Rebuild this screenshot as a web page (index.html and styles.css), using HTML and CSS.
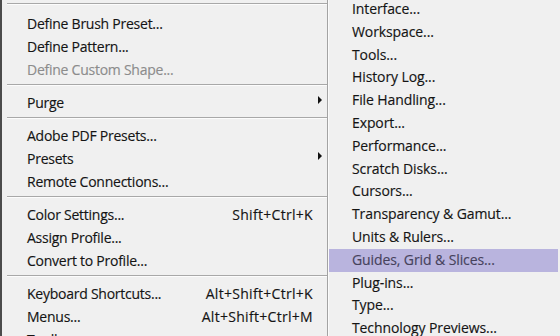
FILE: index.html
```html
<!DOCTYPE html>
<html lang="en">
<head>
    <meta charset="UTF-8">
    <title>Edit Menu - Preferences</title>
    <link rel="stylesheet" href="styles.css">
</head>
<body>
    <div id="menus">
        <div class="menu" id="edit-menu">
            <div class="sep sep-top"></div>
            <div class="item">Define Brush Preset...</div>
            <div class="item">Define Pattern...</div>
            <div class="item disabled">Define Custom Shape...</div>
            <div class="sep"></div>
            <div class="item">Purge<span class="arrow"></span></div>
            <div class="sep"></div>
            <div class="item">Adobe PDF Presets...</div>
            <div class="item">Presets<span class="arrow"></span></div>
            <div class="item">Remote Connections...</div>
            <div class="sep"></div>
            <div class="item">Color Settings...<span class="key">Shift+Ctrl+K</span></div>
            <div class="item">Assign Profile...</div>
            <div class="item">Convert to Profile...</div>
            <div class="sep"></div>
            <div class="item">Keyboard Shortcuts...<span class="key">Alt+Shift+Ctrl+K</span></div>
            <div class="item">Menus...<span class="key">Alt+Shift+Ctrl+M</span></div>
            <div class="item">Toolbar...</div>
        </div>

        <div class="menu" id="prefs-menu">
            <div class="item">Interface...</div>
            <div class="item">Workspace...</div>
            <div class="item">Tools...</div>
            <div class="item">History Log...</div>
            <div class="item">File Handling...</div>
            <div class="item">Export...</div>
            <div class="item">Performance...</div>
            <div class="item">Scratch Disks...</div>
            <div class="item">Cursors...</div>
            <div class="item">Transparency &amp; Gamut...</div>
            <div class="item">Units &amp; Rulers...</div>
            <div class="item active">Guides, Grid &amp; Slices...</div>
            <div class="item">Plug-ins...</div>
            <div class="item">Type...</div>
            <div class="item">Technology Previews...</div>
        </div>
    </div>
</body>
</html>
```

FILE: styles.css
```css
body {
    margin: 0;
    width: 560px;
    height: 336px;
    overflow: hidden;
    background-color: #f0f0f0;
    font-family: "Open Sans", "Noto Sans", sans-serif;
    font-size: 14px;
    letter-spacing: -0.25px;
    color: #141414;
    -webkit-text-stroke: 0.15px #141414;
}
#menus {
    display: flex;
    height: 336px;
}
.menu {
    background-color: #f0f0f0;
}
#edit-menu {
    width: 325px;
    border-left: 2px solid #4c4c4c;
    border-right: 1px solid #a3a3a3;
}
#prefs-menu {
    flex: 1;
    border-left: 1px solid #fbfbfb;
    padding-right: 2px;
    margin-top: -2px;
    letter-spacing: -0.1px;
}
.item {
    display: flex;
    justify-content: space-between;
    align-items: center;
    height: 23px;
    line-height: 23px;
    white-space: nowrap;
    position: relative;
}
#edit-menu .item {
    padding: 0 14px 0 25px;
}
#prefs-menu .item {
    height: 22.8px;
    line-height: 22.8px;
    padding-left: 23px;
}
.item.disabled {
    color: #8c8c8c;
    -webkit-text-stroke: 0.15px #8c8c8c;
}
.item.active {
    background-color: #b9b4de;
    color: #46425c;
    -webkit-text-stroke: 0.15px #46425c;
}
.key {
    margin-left: auto;
    letter-spacing: 0.3px;
}
.arrow {
    position: absolute;
    right: 5px;
    top: 5px;
    width: 0;
    height: 0;
    border-top: 4px solid transparent;
    border-bottom: 4px solid transparent;
    border-left: 4px solid #111;
}
.sep {
    margin: 3px 0 5px 5px;
    border-top: 1px solid #a8a8a8;
    border-bottom: 1px solid #fcfcfc;
    height: 0;
}
.sep.sep-top {
    margin-top: 3px;
    margin-bottom: 7px;
}
```
